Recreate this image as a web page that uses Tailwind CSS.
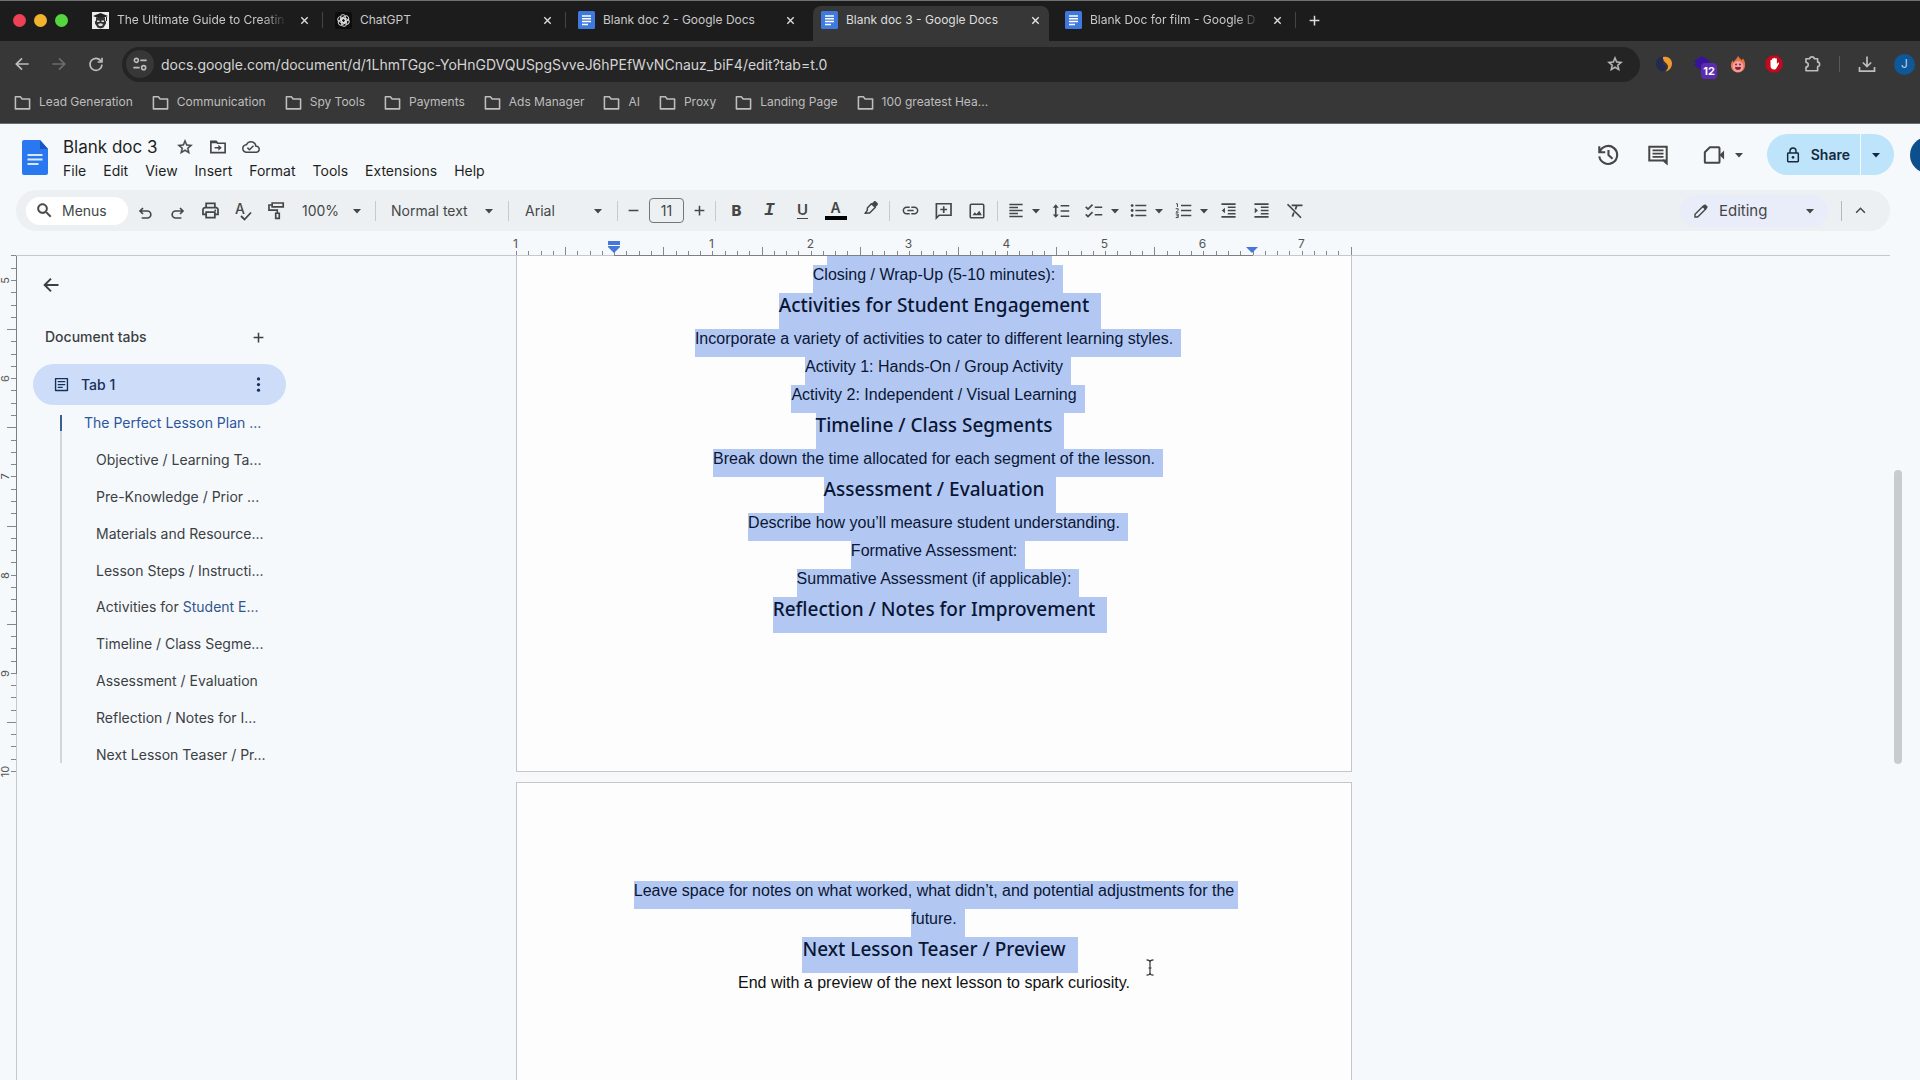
<!DOCTYPE html>
<html lang="en">
<head>
    <meta charset="UTF-8">
    <meta name="viewport" content="width=device-width, initial-scale=1.0">
    <title>Blank doc 3 - Google Docs</title>
    <script src="https://cdn.jsdelivr.net/npm/@tailwindcss/browser@4"></script>
</head>
<body class="flex flex-col h-screen overflow-hidden bg-[#f5f9fb] font-['Inter',sans-serif] text-sm text-[#3c4043]">

    <!-- Icon sprite -->
    <svg class="hidden" aria-hidden="true">
        <symbol id="close" viewBox="0 0 24 24"><path d="M5 5l14 14M19 5L5 19" fill="none" stroke="currentColor" stroke-width="3"/></symbol>
        <symbol id="plus" viewBox="0 0 24 24"><path d="M12 3v18M3 12h18" fill="none" stroke="currentColor" stroke-width="2.800"/></symbol>
        <symbol id="minus" viewBox="0 0 24 24"><path d="M3 12h18" fill="none" stroke="currentColor" stroke-width="2.800"/></symbol>
        <symbol id="back" viewBox="0 0 24 24"><path d="M22 12H4M12 3.500L3.500 12l8.500 8.500" fill="none" stroke="currentColor" stroke-width="2.600"/></symbol>
        <symbol id="forward" viewBox="0 0 24 24"><path d="M2 12h18M12 3.500l8.500 8.500-8.500 8.500" fill="none" stroke="currentColor" stroke-width="2.600"/></symbol>
        <symbol id="reload" viewBox="0 0 24 24"><path d="M19.500 7.500A9 9 0 1 0 21 13M21 2.500V9h-6.500" fill="none" stroke="currentColor" stroke-width="2.500"/></symbol>
        <symbol id="tune" viewBox="0 0 24 24"><g fill="none" stroke="currentColor" stroke-width="2.400"><circle cx="6.500" cy="6.500" r="3"/><path d="M12.500 6.500H22M2 17.500h9.500"/><circle cx="17.500" cy="17.500" r="3"/></g></symbol>
        <symbol id="star" viewBox="0 0 24 24"><path fill="currentColor" stroke="currentColor" stroke-width="0.500" d="M22 9.240l-7.190-.62L12 2 9.190 8.630 2 9.240l5.460 4.730L5.820 21 12 17.270 18.180 21l-1.630-7.030L22 9.240zM12 15.400l-3.760 2.270 1-4.280-3.320-2.880 4.380-.38L12 6.100l1.710 4.040 4.380.38-3.320 2.880 1 4.280L12 15.400z"/></symbol>
        <symbol id="folder" viewBox="0 0 24 24"><path d="M2 21V4h7l2.500 3H22v14z" fill="none" stroke="currentColor" stroke-width="2.200" stroke-linejoin="round"/></symbol>
        <symbol id="doc" viewBox="0 0 17 18"><rect width="17" height="18" rx="1.500" fill="#4079dd"/><path d="M4 5h9M4 7.800h9M4 10.600h9M4 13.400h6" stroke="#fff" stroke-width="1.500"/></symbol>
        <symbol id="puzzle" viewBox="0 0 24 24"><path d="M4 5h5a3 2.600 0 0 1 6 0h4.500v4.500a2.600 3 0 0 1 0 6V21H4v-5a3 3 0 0 0 0-6z" fill="none" stroke="currentColor" stroke-width="2.200" stroke-linejoin="round"/></symbol>
        <symbol id="download" viewBox="0 0 24 24"><path d="M12 2v13M6.500 10l5.500 5.500 5.500-5.500M2 16v5.500h20V16" fill="none" stroke="currentColor" stroke-width="2.300"/></symbol>
        <symbol id="move" viewBox="0 0 24 24"><path d="M2.500 19.500v-15h7l2 2.500h10v12.500z" fill="none" stroke="currentColor" stroke-width="2.200"/><path d="M2 4h8l2 3H2zM12.500 9l4.500 4-4.500 4v-3H7.500v-2h5z" fill="currentColor"/></symbol>
        <symbol id="cloud" viewBox="0 0 24 24"><path fill="currentColor" d="M19.350 10.040C18.670 6.590 15.640 4 12 4 9.110 4 6.600 5.640 5.350 8.040 2.340 8.360 0 10.910 0 14c0 3.310 2.690 6 6 6h13c2.760 0 5-2.240 5-5 0-2.640-2.050-4.780-4.650-4.960zM19 18H6c-2.210 0-4-1.790-4-4 0-2.050 1.530-3.760 3.560-3.970l1.070-.11.5-.95C8.080 7.140 9.940 6 12 6c2.620 0 4.880 1.860 5.390 4.430l.3 1.500 1.530.11c1.560.1 2.780 1.410 2.780 2.960 0 1.650-1.350 3-3 3zm-9-3.820l-2.090-2.090L6.500 13.500 10 17l6.010-6.010-1.410-1.410z"/></symbol>
        <symbol id="history" viewBox="0 0 24 24"><path d="M3 8.500a9.800 9.800 0 1 1-.5 5M2.500 2.500V9H9M12.500 6.500V12l4.500 4" fill="none" stroke="currentColor" stroke-width="2.300"/></symbol>
        <symbol id="comment" viewBox="0 0 24 24"><path d="M2.500 3h19v18l-3.500-3H2.500z" fill="none" stroke="currentColor" stroke-width="2.200"/><path d="M21 22v-5h-4z" fill="currentColor"/><path d="M6 7h12M6 10.500h12M6 14h12" stroke="currentColor" stroke-width="2"/></symbol>
        <symbol id="video" viewBox="0 0 24 24"><path d="M7.500 3.500H17a1 1 0 0 1 1 1v15a1 1 0 0 1-1 1H3a1 1 0 0 1-1-1V9z" fill="none" stroke="currentColor" stroke-width="2.200" stroke-linejoin="round"/><path d="M18 12l5-5v10z" fill="currentColor"/></symbol>
        <symbol id="lock" viewBox="0 0 24 24"><g fill="none" stroke="currentColor" stroke-width="2.200"><rect x="4" y="9" width="16" height="13" rx="1"/><path d="M7.500 9V6a4.500 4.500 0 0 1 9 0v3"/></g><circle cx="12" cy="15.500" r="2" fill="currentColor"/></symbol>
        <symbol id="drop" viewBox="0 0 10 10"><path d="M0 2.500h10L5 8z" fill="currentColor"/></symbol>
        <symbol id="search" viewBox="0 0 24 24"><path fill="currentColor" stroke="currentColor" stroke-width="0.500" d="M15.500 14h-.79l-.28-.27C15.410 12.590 16 11.110 16 9.500 16 5.910 13.090 3 9.500 3S3 5.910 3 9.500 5.910 16 9.500 16c1.610 0 3.090-.59 4.230-1.570l.27.28v.79l5 4.990L20.490 19l-4.990-5zm-6 0C7.010 14 5 11.990 5 9.500S7.010 5 9.500 5 14 7.010 14 9.500 11.990 14 9.500 14z"/></symbol>
        <symbol id="undo" viewBox="0 0 24 24"><path d="M9 4.500L4.500 9 9 13.500M5 9h10.500a5 5 0 0 1 0 10.500H7" fill="none" stroke="currentColor" stroke-width="2.500"/></symbol>
        <symbol id="redo" viewBox="0 0 24 24"><path d="M15 4.500L19.500 9 15 13.500M19 9H8.500a5 5 0 0 0 0 10.500H17" fill="none" stroke="currentColor" stroke-width="2.500"/></symbol>
        <symbol id="print" viewBox="0 0 24 24"><g fill="none" stroke="currentColor" stroke-width="2.200"><path d="M6.500 8V3h11v5M6.500 17H2.500v-6a2.500 2.500 0 0 1 2.500-2.500h14a2.500 2.500 0 0 1 2.500 2.500v6h-4"/><path d="M6.500 14h11v7h-11z"/></g><circle cx="18" cy="11.800" r="1.200" fill="currentColor"/></symbol>
        <symbol id="check" viewBox="0 0 12 10"><path d="M1 5l3.500 3.500L11 1.500" fill="none" stroke="currentColor" stroke-width="1.800"/></symbol>
        <symbol id="roller" viewBox="0 0 24 24"><path d="M6.500 2.500h14v5h-14zM6.500 5H2.500v6.500H13v4M11 15.500h4.500V22H11z" fill="none" stroke="currentColor" stroke-width="2.100"/></symbol>
        <symbol id="pencil" viewBox="0 0 24 24"><path d="M3 21v-4L15.500 4.500l4 4L7 21z" fill="none" stroke="currentColor" stroke-width="2.100"/><path d="M14 6l3-3.500a1.500 1.500 0 0 1 2 0L21.500 5a1.500 1.500 0 0 1 0 2L18 10z" fill="currentColor"/></symbol>
        <symbol id="marker" viewBox="0 0 24 24"><path d="M13 5.500l3.500-3.500a2 2 0 0 1 2.500 0l3 3a2 2 0 0 1 0 2.500L18.500 11z" fill="currentColor"/><path d="M12.500 5.500L6.500 12v3.500L3 20l5.500-.5H10l8.500-8.500z" fill="none" stroke="currentColor" stroke-width="2.200" stroke-linejoin="round"/></symbol>
        <symbol id="link" viewBox="0 0 24 24"><path fill="currentColor" d="M3.900 12c0-1.710 1.390-3.100 3.100-3.100h4V7H7c-2.760 0-5 2.240-5 5s2.240 5 5 5h4v-1.900H7c-1.710 0-3.100-1.390-3.100-3.100zM8 13h8v-2H8v2zm9-6h-4v1.900h4c1.710 0 3.100 1.390 3.100 3.100s-1.390 3.100-3.100 3.100h-4V17h4c2.760 0 5-2.240 5-5s-2.240-5-5-5z"/></symbol>
        <symbol id="addcomment" viewBox="0 0 24 24"><path d="M3 21.500V3.500h18.500v14.500H6.500zM12.300 6.500v8.500M8 10.700h8.500" fill="none" stroke="currentColor" stroke-width="2.100"/></symbol>
        <symbol id="image" viewBox="0 0 24 24"><rect x="3" y="3" width="18" height="18" rx="1.500" fill="none" stroke="currentColor" stroke-width="2.100"/><path d="M6 17.500l3-4 2.500 2.500 3.500-4.500 3.500 6z" fill="currentColor"/></symbol>
        <symbol id="align" viewBox="0 0 24 24"><path d="M2 3h20M2 7.500h13M2 12h20M2 16.500h13M2 21h20" stroke="currentColor" stroke-width="2.200"/></symbol>
        <symbol id="spacing" viewBox="0 0 24 24"><path d="M11.500 5H23M11.500 12H23M11.500 19H23M5 5v14" stroke="currentColor" stroke-width="2.200"/><path d="M1 7.500L5 3l4 4.500zM1 16.500L5 21l4-4.500z" fill="currentColor"/></symbol>
        <symbol id="checklist" viewBox="0 0 24 24"><path d="M13 7h10M13 17h10M1 6.500L4 9.500 10 3.500M1 16.500l3 3 6-6" fill="none" stroke="currentColor" stroke-width="2.200"/></symbol>
        <symbol id="bullets" viewBox="0 0 24 24"><path d="M7.500 5H23M7.500 12H23M7.500 19H23" stroke="currentColor" stroke-width="2.200"/><g fill="currentColor"><circle cx="3" cy="5" r="2"/><circle cx="3" cy="12" r="2"/><circle cx="3" cy="19" r="2"/></g></symbol>
        <symbol id="numbers" viewBox="0 0 24 24"><path d="M8.500 5H23M8.500 12H23M8.500 19H23" stroke="currentColor" stroke-width="2.200"/><path d="M1.500 2.500h2V7M1 9.500h3.500v2L1.500 14.500H5M1 17h3.500v5H1M2 19.500h2.500" fill="none" stroke="currentColor" stroke-width="1.400"/></symbol>
        <symbol id="outdent" viewBox="0 0 24 24"><path d="M2 3h20M11 7.500h11M11 12h11M11 16.500h11M2 21h20" stroke="currentColor" stroke-width="2.200"/><path d="M7 8v8l-4.500-4z" fill="currentColor"/></symbol>
        <symbol id="indent" viewBox="0 0 24 24"><path d="M2 3h20M11 7.500h11M11 12h11M11 16.500h11M2 21h20" stroke="currentColor" stroke-width="2.200"/><path d="M2.500 8v8L7 12z" fill="currentColor"/></symbol>
        <symbol id="clear" viewBox="0 0 24 24"><path d="M2 3l18 18M7.500 4.500H22M14.500 4.500l-2 5.500M10.500 14l-2 5.500" fill="none" stroke="currentColor" stroke-width="2.300"/></symbol>
        <symbol id="chevron" viewBox="0 0 24 24"><path d="M4 16l8-8 8 8" fill="none" stroke="currentColor" stroke-width="2.800"/></symbol>
        <symbol id="tab" viewBox="0 0 24 24"><path d="M2.500 2.500h19v19h-19z" fill="none" stroke="currentColor" stroke-width="2.200" stroke-linejoin="round"/><path d="M6 7.500h12M6 12h12M6 16.500h8" stroke="currentColor" stroke-width="2"/></symbol>
        <symbol id="dots" viewBox="0 0 24 24"><g fill="currentColor"><circle cx="12" cy="3" r="2.600"/><circle cx="12" cy="12" r="2.600"/><circle cx="12" cy="21" r="2.600"/></g></symbol>
    </svg>

    <!-- Browser tabs -->
    <div class="flex items-center h-[41px] shrink-0 border-t border-[#6f7170] bg-[#1c1c1c] text-xs text-[#c9c9c9]">
        <div class="flex w-21 shrink-0 gap-2 pl-[13px] pb-px">
            <span class="size-[13px] rounded-full bg-[#ee4155]"></span>
            <span class="size-[13px] rounded-full bg-[#f2b32d]"></span>
            <span class="size-[13px] rounded-full bg-[#55d63f]"></span>
        </div>
        <div class="flex items-center w-[243px] h-full pl-2 pr-1 pb-0.5">
            <svg class="size-[17px] mr-2 shrink-0" viewBox="0 0 17 17"><rect width="17" height="17" fill="#eee"/><path d="M1 4l7.500-3L16 4l-7.500 3z" fill="#222"/><path d="M4 5.500h9v3l1 1v2l-2.500 4-3 1-3-1L3 11.500v-2l1-1z" fill="#333"/><path d="M5 8.500h2.500v1.500H5zM9.500 8.500H12v1.500H9.500zM6 12l2.500-.8 2.500.8-1 2H7z" fill="#ddd"/><path d="M14.500 5v4" stroke="#222"/></svg>
            <a href="#" class="flex-1 whitespace-nowrap [mask-image:linear-gradient(to_right,black_86%,transparent)]">The Ultimate Guide to Creatin</a>
            <button class="ml-3 mr-3 text-[#dcdcdc]" aria-label="Close tab"><svg class="size-[11px]"><use href="#close"/></svg></button>
            <span class="w-px h-4 bg-[#444]"></span>
        </div>
        <div class="flex items-center w-[243px] h-full pl-2 pr-1 pb-0.5">
            <svg class="size-[17px] mr-2 shrink-0" viewBox="0 0 17 17"><rect width="17" height="17" rx="2" fill="#0d0d0d"/><g fill="none" stroke="#ddd" stroke-width="0.900"><rect x="5.500" y="2.600" width="5" height="8" rx="2.500"/><rect x="5.500" y="2.600" width="5" height="8" rx="2.500" transform="rotate(60 8.500 8.500)"/><rect x="5.500" y="2.600" width="5" height="8" rx="2.500" transform="rotate(120 8.500 8.500)"/><rect x="5.500" y="2.600" width="5" height="8" rx="2.500" transform="rotate(180 8.500 8.500)"/><rect x="5.500" y="2.600" width="5" height="8" rx="2.500" transform="rotate(240 8.500 8.500)"/><rect x="5.500" y="2.600" width="5" height="8" rx="2.500" transform="rotate(300 8.500 8.500)"/></g></svg>
            <a href="#" class="flex-1">ChatGPT</a>
            <button class="ml-3 mr-3 text-[#dcdcdc]" aria-label="Close tab"><svg class="size-[11px]"><use href="#close"/></svg></button>
            <span class="w-px h-4 bg-[#444]"></span>
        </div>
        <div class="flex items-center w-[243px] h-full pl-2 pr-1 pb-0.5">
            <svg class="w-[17px] h-[18px] mr-2 shrink-0"><use href="#doc"/></svg>
            <a href="#" class="flex-1">Blank doc 2 - Google Docs</a>
            <button class="ml-3 mr-[13px] text-[#dcdcdc]" aria-label="Close tab"><svg class="size-[11px]"><use href="#close"/></svg></button>
        </div>
        <div class="flex self-end items-center w-[236px] h-[35px] px-2 pb-[7px] mr-2 rounded-t-lg bg-[#373737]">
            <svg class="w-[17px] h-[18px] mr-2 shrink-0"><use href="#doc"/></svg>
            <a href="#" class="flex-1 text-[#dedede]">Blank doc 3 - Google Docs</a>
            <button class="ml-3 text-[#e6e6e6]" aria-label="Close tab"><svg class="size-[11px]"><use href="#close"/></svg></button>
        </div>
        <div class="flex items-center w-[243px] h-full pl-2 pr-1 pb-0.5">
            <svg class="w-[17px] h-[18px] mr-2 shrink-0"><use href="#doc"/></svg>
            <a href="#" class="flex-1 whitespace-nowrap [mask-image:linear-gradient(to_right,black_86%,transparent)]">Blank Doc for film - Google D</a>
            <button class="ml-3 mr-3 text-[#dcdcdc]" aria-label="Close tab"><svg class="size-[11px]"><use href="#close"/></svg></button>
            <span class="w-px h-4 bg-[#444]"></span>
        </div>
        <button class="ml-2 pb-px text-[#dcdcdc]" aria-label="New tab"><svg class="size-[13px]"><use href="#plus"/></svg></button>
    </div>

    <!-- Address bar -->
    <div class="flex items-center h-[46px] shrink-0 pl-3 bg-[#373737] text-[#bdbdbd]">
        <button class="flex justify-center w-5" aria-label="Back"><svg class="size-4"><use href="#back"/></svg></button>
        <button class="flex justify-center w-5 ml-[17px] text-[#6c6c6c]" aria-label="Forward"><svg class="size-4"><use href="#forward"/></svg></button>
        <button class="flex justify-center w-5 ml-[17px]" aria-label="Reload"><svg class="size-4"><use href="#reload"/></svg></button>
        <div class="flex items-center flex-1 h-[35px] ml-4 pl-1 pr-4 rounded-full bg-[#242424]">
            <button class="flex items-center justify-center size-7 rounded-full bg-[#373737]" aria-label="Site information"><svg class="size-4"><use href="#tune"/></svg></button>
            <input type="text" aria-label="Address" class="flex-1 h-7 ml-[7px] bg-transparent text-sm text-[#d4d4d4] outline-none" value="docs.google.com/document/d/1LhmTGgc-YoHnGDVQUSpgSvveJ6hPEfWvNCnauz_biF4/edit?tab=t.0">
            <button aria-label="Bookmark"><svg class="size-[18px]"><use href="#star"/></svg></button>
        </div>
        <div class="flex items-center ml-[13px]">
            <button class="flex justify-center w-[22px] mr-4" aria-label="Swirl extension"><svg class="size-[18px]" viewBox="0 0 18 18"><path d="M9 1.500c-5 0-8 3-8 7 0 5 4 8 7 8 3-1 4-4 1.500-6.500C7 7.500 7 4 9 1.500z" fill="#232a4d"/><path d="M8 2c5-1.500 9 2 9 6.500 0 4.500-3.500 7.500-6.500 8 3-3 3.500-5.500 1-8C9 6.500 7.500 4 8 2z" fill="#ee9a2e"/></svg></button>
            <button class="relative flex justify-center w-[22px] mr-[14px]" aria-label="Layers extension"><svg class="size-[18px]" viewBox="0 0 18 18"><path d="M9 1l8 5-2 2 1 2-7 6-8-6 2-2-2-2z" fill="#38149a"/></svg><span class="absolute left-[10px] top-2 px-px w-4 h-4 rounded-sm bg-[#5b2bb0] text-[11px] leading-4 font-bold text-white text-center">12</span></button>
            <button class="flex justify-center w-[22px] mr-[14px]" aria-label="Flame extension"><svg class="size-[18px]" viewBox="0 0 18 18"><path d="M9 0.500c1 3 3 3 3.500 5l1.500-2c2 3 2.500 5 2 8-.6 3.500-3.500 6-7 6s-6.500-2.500-7-6c-.4-2.500.5-4.500 1.500-6l1.500 2C5 5 8.500 4 9 .500z" fill="#e8753f"/><circle cx="9" cy="11.500" r="5.500" fill="#f2a0a8"/><path d="M6 12a3 3 0 0 0 6 0z" fill="#8c2330"/><circle cx="7" cy="9.500" r="1" fill="#8c2330"/><circle cx="11" cy="9.500" r="1" fill="#8c2330"/></svg></button>
            <button class="flex justify-center w-[22px] mr-4" aria-label="Ad blocker"><svg class="size-[18px]" viewBox="0 0 18 18"><path d="M5.500.5h7l5 5v7l-5 5h-7l-5-5v-7z" fill="#c4091c"/><path d="M5.500 8V5.500a.8.8 0 0 1 1.600 0V4a.8.8 0 0 1 1.600 0v-.5a.8.800 0 0 1 1.600 0V4a.8.8 0 0 1 1.600 0v5l1-1.200c.9-.6 1.500 0 1 .9L11.500 13c-.5 1-1.300 1.500-2.500 1.500-2 0-3.500-1.300-3.500-3.500z" fill="#fff"/></svg></button>
            <button class="flex justify-center w-[22px] mr-4" aria-label="Extensions"><svg class="size-[18px]"><use href="#puzzle"/></svg></button>
            <span class="w-px h-4 mr-4 bg-[#5a5a5a]"></span>
            <button class="flex justify-center w-[22px] mr-4" aria-label="Downloads"><svg class="size-[18px]"><use href="#download"/></svg></button>
            <button class="size-[21px] mr-[5px] rounded-full bg-[#0f5797] text-xs text-[#b9d3ea]" aria-label="Profile">J</button>
        </div>
    </div>

    <!-- Bookmarks -->
    <nav class="flex items-center gap-[19px] h-[37px] shrink-0 pl-[14px] pb-1.5 border-b border-[#6a6b6b] bg-[#373737] text-xs text-[#bebebe]">
        <a href="#" class="flex items-center gap-2"><svg class="size-[17px]"><use href="#folder"/></svg>Lead Generation</a>
        <a href="#" class="flex items-center gap-2"><svg class="size-[17px]"><use href="#folder"/></svg>Communication</a>
        <a href="#" class="flex items-center gap-2"><svg class="size-[17px]"><use href="#folder"/></svg>Spy Tools</a>
        <a href="#" class="flex items-center gap-2"><svg class="size-[17px]"><use href="#folder"/></svg>Payments</a>
        <a href="#" class="flex items-center gap-2"><svg class="size-[17px]"><use href="#folder"/></svg>Ads Manager</a>
        <a href="#" class="flex items-center gap-2"><svg class="size-[17px]"><use href="#folder"/></svg>AI</a>
        <a href="#" class="flex items-center gap-2"><svg class="size-[17px]"><use href="#folder"/></svg>Proxy</a>
        <a href="#" class="flex items-center gap-2"><svg class="size-[17px]"><use href="#folder"/></svg>Landing Page</a>
        <a href="#" class="flex items-center gap-2"><svg class="size-[17px]"><use href="#folder"/></svg>100 greatest Hea...</a>
    </nav>

    <!-- Document header -->
    <header class="flex h-[66px] shrink-0 pl-[22px] text-[#1f1f1f]">
        <a href="#" class="mt-4" aria-label="Docs home">
            <svg class="w-[26px] h-[35px]" viewBox="0 0 26 35"><path d="M2 0h16l8 9v24a2 2 0 0 1-2 2H2a2 2 0 0 1-2-2V2a2 2 0 0 1 2-2z" fill="#2a78f0"/><path d="M18 0l8 9h-8z" fill="#1557c4"/><path d="M5.500 15h15M5.500 19.500h15M5.500 24h11" stroke="#d8e9ff" stroke-width="2"/></svg>
        </a>
        <div class="flex-1 ml-[15px] pt-[10px]">
            <div class="flex items-center h-[26px]">
                <h1 class="text-[17px]">Blank doc 3</h1>
                <button class="ml-[18px] text-[#444746]" aria-label="Star"><svg class="size-[18px]"><use href="#star"/></svg></button>
                <button class="ml-[15px] text-[#444746]" aria-label="Move"><svg class="size-[18px]"><use href="#move"/></svg></button>
                <button class="ml-[15px] text-[#444746]" aria-label="Document status"><svg class="size-[18px]"><use href="#cloud"/></svg></button>
            </div>
            <nav class="flex gap-[17px] h-[22px] items-center">
                <button>File</button><button>Edit</button><button>View</button><button>Insert</button><button>Format</button><button>Tools</button><button>Extensions</button><button>Help</button>
            </nav>
        </div>
        <div class="flex items-center h-[41px] mt-[10px] text-[#444746]">
            <button aria-label="Version history"><svg class="size-[22px]"><use href="#history"/></svg></button>
            <button class="ml-7" aria-label="Comments"><svg class="size-[22px]"><use href="#comment"/></svg></button>
            <button class="flex items-center gap-[10px] ml-[34px]" aria-label="Join a call"><svg class="size-[22px]"><use href="#video"/></svg><svg class="size-2"><use href="#drop"/></svg></button>
            <button class="flex items-center gap-[10px] h-full ml-6 pl-[18px] pr-[10px] rounded-l-full bg-[#bde4fb] text-sm font-semibold text-[#16283c]"><svg class="size-4"><use href="#lock"/></svg>Share</button>
            <button class="flex items-center h-full ml-px pl-[11px] pr-[14px] rounded-r-full bg-[#bde4fb] text-[#16283c]" aria-label="Share options"><svg class="size-2"><use href="#drop"/></svg></button>
            <div class="flex w-[10px] ml-4 overflow-hidden"><span class="size-9 shrink-0 rounded-full bg-[#0d4f8c]"></span></div>
        </div>
    </header>

    <!-- Toolbar -->
    <div class="flex items-center h-[41px] shrink-0 ml-4 mr-[30px] pl-[10px] rounded-full bg-[#ecf0f3] text-[#444746]">
        <button class="flex items-center gap-2 w-[102px] h-7 pl-[9px] rounded-full bg-white"><svg class="size-[19px]"><use href="#search"/></svg>Menus</button>
        <button class="flex justify-center w-[33px] pt-1" aria-label="Undo"><svg class="size-4"><use href="#undo"/></svg></button>
        <button class="flex justify-center w-[33px] pt-1" aria-label="Redo"><svg class="size-4"><use href="#redo"/></svg></button>
        <button class="flex justify-center w-[33px]" aria-label="Print"><svg class="size-[19px]"><use href="#print"/></svg></button>
        <button class="relative flex w-[33px] pl-2 pb-1 text-sm leading-4 font-medium" aria-label="Spelling">A<svg class="absolute left-[13px] top-[10px] w-3 h-[10px]"><use href="#check"/></svg></button>
        <button class="flex justify-center w-[33px]" aria-label="Paint format"><svg class="size-[19px]"><use href="#roller"/></svg></button>
        <label class="relative flex items-center w-[82px]">
            <select aria-label="Zoom" class="appearance-none w-full pl-[9px] bg-transparent"><option>100%</option></select>
            <svg class="absolute right-[14px] size-2 pointer-events-none"><use href="#drop"/></svg>
        </label>
        <span class="w-px h-5 bg-[#c7c9cb]"></span>
        <label class="relative flex items-center w-[132px]">
            <select aria-label="Style" class="appearance-none w-full pl-[15px] bg-transparent"><option>Normal text</option></select>
            <svg class="absolute right-[15px] size-2 pointer-events-none"><use href="#drop"/></svg>
        </label>
        <span class="w-px h-5 bg-[#c7c9cb]"></span>
        <label class="relative flex items-center w-[108px]">
            <select aria-label="Font" class="appearance-none w-full pl-4 bg-transparent"><option>Arial</option></select>
            <svg class="absolute right-[15px] size-2 pointer-events-none"><use href="#drop"/></svg>
        </label>
        <span class="w-px h-5 bg-[#c7c9cb]"></span>
        <button class="flex justify-center w-[31px]" aria-label="Decrease font size"><svg class="size-[13px]"><use href="#minus"/></svg></button>
        <input type="text" aria-label="Font size" value="11" class="w-[35px] h-[25px] rounded-sm border border-[#747775] bg-transparent text-center">
        <button class="flex justify-center w-[31px]" aria-label="Increase font size"><svg class="size-[13px]"><use href="#plus"/></svg></button>
        <span class="w-px h-5 bg-[#c7c9cb]"></span>
        <div class="flex items-center px-1">
            <button class="w-[33px] text-[15px] font-extrabold" aria-label="Bold">B</button>
            <button class="w-[33px] text-lg leading-5 font-bold italic font-['Liberation_Mono',monospace]" aria-label="Italic">I</button>
            <button class="w-[33px] text-[15px] leading-5 font-semibold underline underline-offset-3" aria-label="Underline">U</button>
            <button class="flex justify-center w-[33px]" aria-label="Text color"><span class="w-[22px] h-[19px] border-b-4 border-black text-sm leading-[14px] font-semibold">A</span></button>
            <button class="flex justify-center w-[33px] pb-1 pl-1" aria-label="Highlight color"><svg class="size-4"><use href="#marker"/></svg></button>
        </div>
        <span class="w-px h-5 bg-[#c7c9cb]"></span>
        <div class="flex items-center px-1">
            <button class="flex justify-center w-[33px]" aria-label="Insert link"><svg class="size-[19px]"><use href="#link"/></svg></button>
            <button class="flex justify-center w-[33px]" aria-label="Add comment"><svg class="size-[19px]"><use href="#addcomment"/></svg></button>
            <button class="flex justify-center w-[33px]" aria-label="Insert image"><svg class="size-[18px]"><use href="#image"/></svg></button>
        </div>
        <span class="w-px h-5 bg-[#c7c9cb]"></span>
        <button class="flex items-center gap-2 pl-[10px] pr-1" aria-label="Align"><svg class="w-4 h-[17px]"><use href="#align"/></svg><svg class="size-2"><use href="#drop"/></svg></button>
        <button class="flex justify-center w-[33px]" aria-label="Line spacing"><svg class="size-[18px]"><use href="#spacing"/></svg></button>
        <button class="flex items-center justify-center gap-2 w-[45px] pl-1" aria-label="Checklist"><svg class="size-[18px]"><use href="#checklist"/></svg><svg class="size-2"><use href="#drop"/></svg></button>
        <button class="flex items-center justify-center gap-2 w-[45px] pl-1" aria-label="Bulleted list"><svg class="size-[17px]"><use href="#bullets"/></svg><svg class="size-2"><use href="#drop"/></svg></button>
        <button class="flex items-center justify-center gap-2 w-[45px] pl-1" aria-label="Numbered list"><svg class="size-[17px]"><use href="#numbers"/></svg><svg class="size-2"><use href="#drop"/></svg></button>
        <button class="flex justify-center w-[33px]" aria-label="Decrease indent"><svg class="size-[17px]"><use href="#outdent"/></svg></button>
        <button class="flex justify-center w-[33px]" aria-label="Increase indent"><svg class="size-[17px]"><use href="#indent"/></svg></button>
        <button class="flex justify-center w-[33px]" aria-label="Clear formatting"><svg class="size-[18px]"><use href="#clear"/></svg></button>
        <label class="relative flex items-center w-[148px] h-8 ml-auto mr-[13px] rounded-full bg-[#e9ecf9]">
            <svg class="absolute left-[13px] size-4 pointer-events-none"><use href="#pencil"/></svg>
            <select aria-label="Mode" class="appearance-none w-full pl-[39px] bg-transparent text-[15px]"><option>Editing</option></select>
            <svg class="absolute right-[14px] size-2 pointer-events-none"><use href="#drop"/></svg>
        </label>
        <span class="w-px h-5 bg-[#b5b7b9]"></span>
        <button class="mx-3 mr-[23px]" aria-label="Hide menus"><svg class="size-[13px]"><use href="#chevron"/></svg></button>
    </div>

    <!-- Horizontal ruler -->
    <div class="grid grid-cols-[16px_1fr_836px_1fr_68px] h-[25px] shrink-0">
        <div></div>
        <div class="border-b border-[#c6c9cb]"></div>
        <svg id="ruler-x" class="w-full h-[25px] overflow-visible text-xs" viewBox="0 0 836 25">
            <path d="M0 24.500h98M737 24.500h99" stroke="#c6c9cb"/>
            <path d="M98 24.500h639" stroke="#7d8083"/>
        </svg>
        <div class="border-b border-[#c6c9cb]"></div>
        <div class="border-b border-[#c6c9cb] mr-[30px]"></div>
    </div>

    <!-- Workspace -->
    <div class="grid grid-cols-[16px_1fr_836px_1fr_68px] flex-1 min-h-0">
        <svg id="ruler-y" class="w-4 h-full overflow-visible text-[11px]">
            <path d="M16.500 0V418" stroke="#7d8083"/>
            <path d="M16.500 418V824" stroke="#c6c9cb"/>
        </svg>

        <aside class="pl-[17px] pt-5">
            <button class="block ml-[9px]" aria-label="Close outline"><svg class="size-[18px]"><use href="#back"/></svg></button>
            <div class="flex items-center justify-between w-[253px] h-6 mt-[31px] pl-3 pr-[21px]">
                <h2 class="text-sm font-medium">Document tabs</h2>
                <button aria-label="Add tab"><svg class="size-[13px]"><use href="#plus"/></svg></button>
            </div>
            <div class="flex items-center w-[253px] h-[41px] mt-[15px] pl-[21px] pr-5 rounded-full bg-[#cdddf9] text-[#16305a]">
                <svg class="size-[15px]"><use href="#tab"/></svg>
                <a href="#" class="flex-1 ml-3 font-medium">Tab 1</a>
                <button aria-label="Tab options"><svg class="size-[15px]"><use href="#dots"/></svg></button>
            </div>
            <div class="flex w-[253px] h-[368px] pl-[27px]">
                <div class="w-[2px] h-[348px] mt-[10px] bg-[#d3d6d9]"><div class="h-4 bg-[#39608f]"></div></div>
                <ul class="grid auto-rows-fr items-center ml-[22px] whitespace-nowrap">
                    <li><a href="#" class="text-[#2c55a0]">The Perfect Lesson Plan ...</a></li>
                    <li class="pl-3"><a href="#">Objective / Learning Ta...</a></li>
                    <li class="pl-3"><a href="#">Pre-Knowledge / Prior ...</a></li>
                    <li class="pl-3"><a href="#">Materials and Resource...</a></li>
                    <li class="pl-3"><a href="#">Lesson Steps / Instructi...</a></li>
                    <li class="pl-3"><a href="#">Activities for <span class="text-[#34558c]">Student E...</span></a></li>
                    <li class="pl-3"><a href="#">Timeline / Class Segme...</a></li>
                    <li class="pl-3"><a href="#">Assessment / Evaluation</a></li>
                    <li class="pl-3"><a href="#">Reflection / Notes for I...</a></li>
                    <li class="pl-3"><a href="#">Next Lesson Teaser / Pr...</a></li>
                </ul>
            </div>
        </aside>

        <main class="relative flex flex-col gap-[10px] min-h-0 overflow-hidden bg-[#f7f8f9] font-['Liberation_Sans',Arial,sans-serif] text-base text-[#0a1633]">
            <section class="flex flex-col items-center h-[516px] shrink-0 border border-t-0 border-[#c4c6c9] bg-[#fdfdfd]">
                <div class="w-[225px] h-[9px] ml-[10px] bg-[#b2c8f3]"></div>
                <p class="h-7 leading-5 pr-2 -mr-2 bg-[#b2c8f3]">Closing / Wrap-Up (5-10 minutes):</p>
                <h2 class="h-9 leading-6 pr-3 -mr-3 bg-[#b2c8f3] font-['Noto_Sans',sans-serif] text-[19px] font-medium">Activities for Student Engagement</h2>
                <p class="h-7 leading-5 pr-2 -mr-2 bg-[#b2c8f3]">Incorporate a variety of activities to cater to different learning styles.</p>
                <p class="h-7 leading-5 pr-2 -mr-2 bg-[#b2c8f3]">Activity 1: Hands-On / Group Activity</p>
                <p class="h-7 leading-5 pr-2 -mr-2 bg-[#b2c8f3]">Activity 2: Independent / Visual Learning</p>
                <h2 class="h-9 leading-6 pr-3 -mr-3 bg-[#b2c8f3] font-['Noto_Sans',sans-serif] text-[19px] font-medium">Timeline / Class Segments</h2>
                <p class="h-7 leading-5 pr-2 -mr-2 bg-[#b2c8f3]">Break down the time allocated for each segment of the lesson.</p>
                <h2 class="h-9 leading-6 pr-3 -mr-3 bg-[#b2c8f3] font-['Noto_Sans',sans-serif] text-[19px] font-medium">Assessment / Evaluation</h2>
                <p class="h-7 leading-5 pr-2 -mr-2 bg-[#b2c8f3]">Describe how you’ll measure student understanding.</p>
                <p class="h-7 leading-5 pr-2 -mr-2 bg-[#b2c8f3]">Formative Assessment:</p>
                <p class="h-7 leading-5 pr-2 -mr-2 bg-[#b2c8f3]">Summative Assessment (if applicable):</p>
                <h2 class="h-9 leading-6 pr-3 -mr-3 bg-[#b2c8f3] font-['Noto_Sans',sans-serif] text-[19px] font-medium">Reflection / Notes for Improvement</h2>
            </section>
            <section class="flex flex-col items-center h-[1080px] shrink-0 pt-[98px] border border-[#c4c6c9] bg-[#fdfdfd]">
                <p class="h-7 leading-5 pr-1 -mr-1 bg-[#b2c8f3]">Leave space for notes on what worked, what didn’t, and potential adjustments for the</p>
                <p class="h-7 leading-5 pr-2 -mr-2 bg-[#b2c8f3]">future.</p>
                <h2 class="h-9 leading-6 pr-3 -mr-3 bg-[#b2c8f3] font-['Noto_Sans',sans-serif] text-[19px] font-medium">Next Lesson Teaser / Preview</h2>
                <p class="h-7 leading-5 text-[#111]">End with a preview of the next lesson to spark curiosity.</p>
            </section>
            <svg class="absolute left-[630px] top-[703px] w-2 h-[17px]" viewBox="0 0 8 17"><path d="M.5.800C2.500.8 4 1.500 4 3v11c0 1.500-1.500 2.200-3.500 2.200M7.500.8C5.500.8 4 1.500 4 3v11c0 1.500 1.500 2.200 3.500 2.200M2.500 9h3" fill="none" stroke="#333" stroke-width="1.200"/></svg>
        </main>

        <div></div>
        <div class="flex justify-end pr-[18px] pt-[214px]"><div class="w-2 h-[294px] rounded-full bg-[#c9cccf]"></div></div>
    </div>

    <script>
        const NS = 'http://www.w3.org/2000/svg';

        function add(svg, name, attrs, text) {
            const el = document.createElementNS(NS, name);
            for (const key in attrs) el.setAttribute(key, attrs[key]);
            if (text !== undefined) el.textContent = text;
            svg.appendChild(el);
        }

        // Horizontal ruler: eight ticks to the inch, zero at the left margin
        const inch = 98.2;
        const rulerX = document.getElementById('ruler-x');
        for (let i = 0; i <= 68; i++) {
            const x = Math.round(i * inch / 8) + 0.5;
            const h = i % 8 === 4 ? 8 : 4;
            add(rulerX, 'path', { d: `M${x} ${24 - h}V24`, stroke: '#85888b' });
            if (i % 8 === 0 && i !== 8) {
                add(rulerX, 'text', { x: x - 1, y: 17, 'text-anchor': 'middle', fill: '#555' }, Math.abs(i / 8 - 1));
            }
        }
        add(rulerX, 'path', { d: 'M92 10h12v4H92zM92 15h12v1l-6 6-6-6z', fill: '#4678dc' });
        add(rulerX, 'path', { d: 'M730 16h12l-6 6z', fill: '#4678dc' });

        // Vertical ruler
        const rulerY = document.getElementById('ruler-y');
        for (let i = -2; i <= 40; i++) {
            const y = Math.round(24 + i * inch / 8) + 0.5;
            add(rulerY, 'path', { d: `M${(i + 8) % 8 === 4 ? 7 : 11} ${y}H16`, stroke: '#85888b' });
            if (i % 8 === 0) {
                add(rulerY, 'text', { transform: `translate(9 ${y}) rotate(-90)`, 'text-anchor': 'middle', fill: '#555' }, 5 + i / 8);
            }
        }
    </script>
</body>
</html>
